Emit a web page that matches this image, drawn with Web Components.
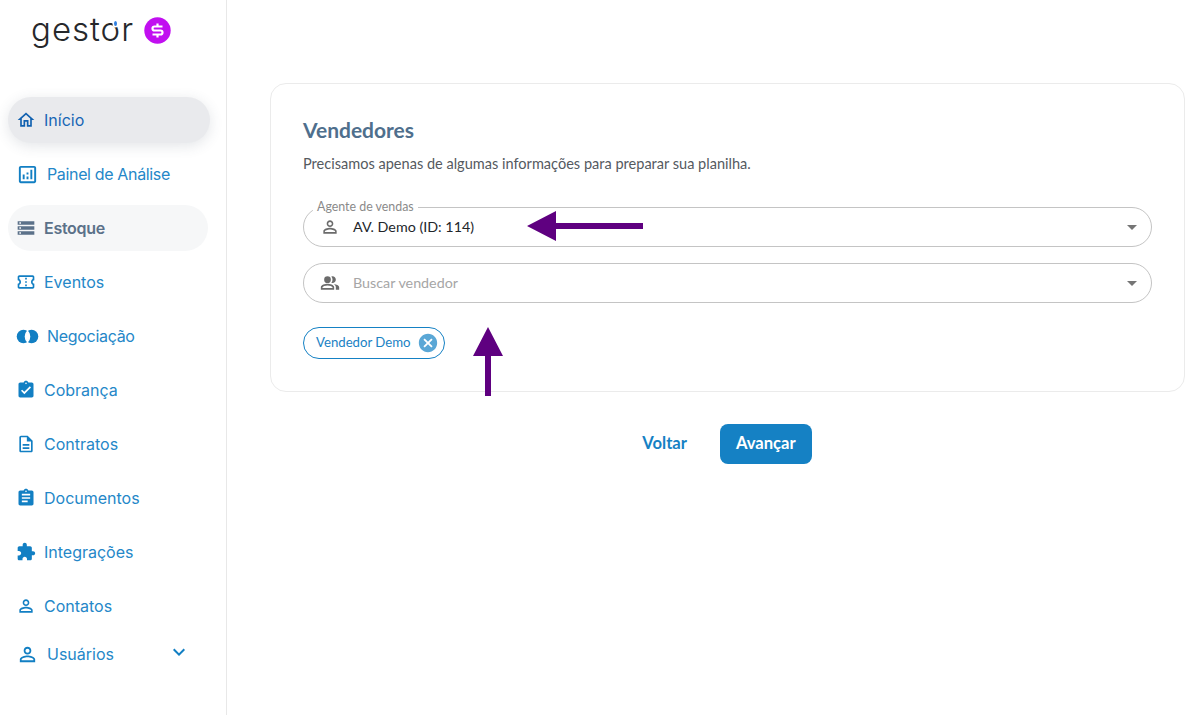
<!DOCTYPE html>
<html lang="pt-BR">
<head>
<meta charset="utf-8">
<title>Vendedores</title>
<style>
html, body { margin: 0; height: 100%; background: #fff; }
body { font-family: "Inter", sans-serif; overflow: hidden; }
gestor-app { height: 715px; }
</style>
</head>
<body>
<gestor-app>
  <gestor-sidebar slot="sidebar">
    <nav-item icon="home" state="active" style="--tone:#1766b5;--icon-tone:#1161b0">Início</nav-item>
    <nav-item icon="analytics" wide style="letter-spacing:-.35px">Painel de Análise</nav-item>
    <nav-item icon="storage" state="muted">Estoque</nav-item>
    <nav-item icon="ticket">Eventos</nav-item>
    <nav-item icon="join" wide style="letter-spacing:-.3px">Negociação</nav-item>
    <nav-item icon="billing">Cobrança</nav-item>
    <nav-item icon="file">Contratos</nav-item>
    <nav-item icon="clipboard">Documentos</nav-item>
    <nav-item icon="puzzle">Integrações</nav-item>
    <nav-item icon="person">Contatos</nav-item>
    <nav-item icon="person" wide expandable class="last">Usuários</nav-item>
  </gestor-sidebar>

  <form-card>
    <span slot="title">Vendedores</span>
    <span slot="subtitle">Precisamos apenas de algumas informações para preparar sua planilha.</span>
    <select-field label="Agente de vendas" value="AV. Demo (ID: 114)" icon="person"></select-field>
    <select-field placeholder="Buscar vendedor" icon="people"></select-field>
    <seller-chip>Vendedor Demo</seller-chip>
  </form-card>

  <form-actions></form-actions>

  <pointer-arrow dir="left"></pointer-arrow>
  <pointer-arrow dir="up"></pointer-arrow>
</gestor-app>

<script>
const ICONS = {
  home: '<path d="M12 5.69l5 4.5V18h-2v-6H9v6H7v-7.81l5-4.5M12 3L2 12h3v8h6v-6h2v6h6v-8h3L12 3z"/>',
  analytics: '<path d="M19 3H5c-1.1 0-2 .9-2 2v14c0 1.1.9 2 2 2h14c1.1 0 2-.9 2-2V5c0-1.1-.9-2-2-2zm0 16H5V5h14v14z"/><path d="M7 12h2v5H7zm8-5h2v10h-2zm-4 7h2v3h-2zm0-4h2v2h-2z"/>',
  storage: '<path d="M2 20h20v-4H2v4zm2-3h2v2H4v-2zM2 4v4h20V4H2zm4 3H4V5h2v2zm-4 7h20v-4H2v4zm2-3h2v2H4v-2z"/>',
  ticket: '<path d="M22 10V6c0-1.1-.9-2-2-2H4c-1.1 0-1.99.9-1.99 2v4c1.1 0 1.99.9 1.99 2s-.89 2-2 2v4c0 1.1.9 2 2 2h16c1.1 0 2-.9 2-2v-4c-1.1 0-2-.9-2-2s.9-2 2-2zm-2-1.46c-1.19.69-2 1.99-2 3.46s.81 2.77 2 3.46V18H4v-2.54c1.19-.69 2-1.99 2-3.46 0-1.48-.8-2.77-1.99-3.46L4 6h16v2.54z"/><path d="M11 15h2v2h-2zm0-4h2v2h-2zm0-4h2v2h-2z"/>',
  join: '<circle cx="7.75" cy="12" r="7"/><circle cx="16.25" cy="12" r="7"/><path d="M12 6.6A7.6 7.6 0 0 1 12 17.4A7.6 7.6 0 0 1 12 6.6z" fill="#fff" stroke="#fff" stroke-width="1.4"/>',
  billing: '<path d="M19 3h-4.18C14.4 1.84 13.3 1 12 1c-1.3 0-2.4.84-2.82 2H5c-1.1 0-2 .9-2 2v14c0 1.1.9 2 2 2h14c1.1 0 2-.9 2-2V5c0-1.1-.9-2-2-2zm-7 0c.55 0 1 .45 1 1s-.45 1-1 1-1-.45-1-1 .45-1 1-1zm-2 14l-4-4 1.41-1.41L10 14.17l6.59-6.59L18 9l-8 8z"/>',
  file: '<path d="M8 16h8v2H8zm0-4h8v2H8zm6-10H6c-1.1 0-2 .9-2 2v16c0 1.1.89 2 1.99 2H18c1.1 0 2-.9 2-2V8l-6-6zm4 18H6V4h7v5h5v11z"/>',
  clipboard: '<path d="M19 3h-4.18C14.4 1.84 13.3 1 12 1c-1.3 0-2.4.84-2.82 2H5c-1.1 0-2 .9-2 2v14c0 1.1.9 2 2 2h14c1.1 0 2-.9 2-2V5c0-1.1-.9-2-2-2zm-7 0c.55 0 1 .45 1 1s-.45 1-1 1-1-.45-1-1 .45-1 1-1zm2 14H7v-2h7v2zm3-4H7v-2h10v2zm0-4H7V7h10v2z"/>',
  puzzle: '<path d="M20.5 11H19V7c0-1.1-.9-2-2-2h-4V3.5C13 2.12 11.88 1 10.5 1S8 2.12 8 3.5V5H4c-1.1 0-1.99.9-1.99 2v3.8H3.5c1.49 0 2.7 1.21 2.7 2.7s-1.21 2.7-2.7 2.7H2V20c0 1.1.9 2 2 2h3.8v-1.5c0-1.49 1.21-2.7 2.7-2.7 1.49 0 2.7 1.21 2.7 2.7V22H17c1.1 0 2-.9 2-2v-4h1.5c1.38 0 2.5-1.12 2.5-2.5S21.88 11 20.5 11z"/>',
  person: '<path d="M12 5.9c1.16 0 2.1.94 2.1 2.1s-.94 2.1-2.1 2.1S9.9 9.16 9.9 8s.94-2.1 2.1-2.1m0 9c2.97 0 6.1 1.46 6.1 2.1v1.1H5.9V17c0-.64 3.13-2.1 6.1-2.1M12 4C9.79 4 8 5.79 8 8s1.79 4 4 4 4-1.79 4-4-1.79-4-4-4zm0 9c-2.67 0-8 1.34-8 4v3h16v-3c0-2.66-5.33-4-8-4z"/>',
  people: '<path d="M16.67 13.13C18.04 14.06 19 15.32 19 17v3h4v-3c0-2.18-3.57-3.47-6.33-3.87z"/><path d="M15 12c2.21 0 4-1.79 4-4s-1.79-4-4-4c-.47 0-.91.1-1.33.24C14.5 5.27 15 6.58 15 8s-.5 2.73-1.33 3.76c.42.14.86.24 1.33.24z"/><circle cx="9" cy="8" r="4"/><path d="M9 13c-2.67 0-8 1.34-8 4v3h16v-3c0-2.66-5.33-4-8-4zm6 5H3v-.99C3.2 16.29 6.3 15 9 15s5.8 1.29 6 2v1z"/>',
  cancel: '<path d="M12 2C6.47 2 2 6.47 2 12s4.47 10 10 10 10-4.47 10-10S17.53 2 12 2zm5 13.59L15.59 17 12 13.41 8.41 17 7 15.59 10.59 12 7 8.41 8.41 7 12 10.59 15.59 7 17 8.41 13.41 12 17 15.59z"/>',
  expand: '<path d="M16.59 8.59L12 13.17 7.41 8.59 6 10l6 6 6-6z"/>',
};

const svgIcon = (name, size) =>
  `<svg width="${size}" height="${size}" viewBox="0 0 24 24" fill="currentColor" aria-hidden="true">${ICONS[name]}</svg>`;

const FORM_FONT = '"Lato", "Noto Sans", sans-serif';

class GestorApp extends HTMLElement {
  constructor() {
    super();
    this.attachShadow({ mode: 'open' });
    this.shadowRoot.innerHTML = `
<style>
:host { display: flex; width: 1203px; position: relative; }
main { flex: 1; display: flex; flex-direction: column; padding: 83px 18px 0 43px; min-width: 0; }
</style>
<slot name="sidebar"></slot>
<main><slot></slot></main>`;
  }
}

class GestorSidebar extends HTMLElement {
  constructor() {
    super();
    this.attachShadow({ mode: 'open' });
    this.shadowRoot.innerHTML = `
<style>
:host { display: block; flex: none; width: 227px; box-sizing: border-box; border-right: 1px solid #e8e8e8; }
.logo { display: flex; align-items: center; gap: 10px; height: 97px; padding: 0 0 37px 31px; box-sizing: border-box; }
.word { position: relative; font: 350 33px/36px "Inter", sans-serif; color: #26282b; letter-spacing: 1px; margin-top: -3px; }
.word i { position: absolute; left: 83px; top: 10px; width: 3px; height: 5px; border-radius: 50%; background: #2f7fe0; box-shadow: 0 0 0 1.5px #fff; }
nav { display: flex; flex-direction: column; gap: 8px; padding-left: 8px; }
</style>
<div class="logo">
  <span class="word">gestor<i></i></span>
  <svg width="27" height="27" viewBox="0 0 27 27" aria-hidden="true">
    <circle cx="13.5" cy="13.5" r="13.2" fill="#c10ff0"/>
    <path d="M18.5 9.5H10.5a1.8 1.8 0 0 0 0 4h6a1.8 1.8 0 0 1 0 4H8.5M13.5 6.4v2.4M13.5 18v2.4" fill="none" stroke="#fff" stroke-width="2.2"/>
  </svg>
</div>
<nav><slot></slot></nav>`;
  }
}

class NavItem extends HTMLElement {
  constructor() {
    super();
    this.attachShadow({ mode: 'open' });
  }

  connectedCallback() {
    const extra = this.hasAttribute('expandable')
      ? `<span class="more">${svgIcon('expand', 24)}</span>`
      : '';
    const size = this.hasAttribute('wide') ? 23 : 20;
    this.shadowRoot.innerHTML = `
<style>
:host { display: flex; align-items: center; height: 46px; width: 200px; border-radius: 23px; box-sizing: border-box; padding-left: 8px; font: 400 16px/24px "Inter", sans-serif; color: var(--tone, #2487c8); }
:host([state="active"]) { width: 202px; background: #e9eaed; box-shadow: 0 3px 14px rgba(60,70,90,.14); }
:host([state="muted"]) { background: #f6f7f8; color: #5b7189; font-weight: 600; --icon-tone: #5b7189; letter-spacing: -.3px; }
:host(.last) { margin-top: -6px; }
.icon { display: flex; flex: none; margin-right: 8px; color: var(--icon-tone, #127fc3); }
.more { display: flex; margin-left: auto; margin-right: 17px; margin-top: -4px; color: #127fc3; }
</style>
<span class="icon">${svgIcon(this.getAttribute('icon'), size)}</span>
<slot></slot>${extra}`;
  }
}

class FormCard extends HTMLElement {
  constructor() {
    super();
    this.attachShadow({ mode: 'open' });
    this.shadowRoot.innerHTML = `
<style>
:host { display: flex; flex-direction: column; height: 309px; box-sizing: border-box; padding: 33px 32px 0; border: 1px solid #ebebeb; border-radius: 16px; background: #fff; font-family: ${FORM_FONT}; }
h2 { margin: 0; font-size: 21px; line-height: 26px; font-weight: 700; color: #4f6f8d; }
p { margin: 11px 0 0; font-size: 14.55px; line-height: 20px; color: #555a5f; }
.fields { display: flex; flex-direction: column; gap: 16px; margin-top: 33px; }
</style>
<h2><slot name="title"></slot></h2>
<p><slot name="subtitle"></slot></p>
<div class="fields"><slot></slot></div>`;
  }
}

class SelectField extends HTMLElement {
  constructor() {
    super();
    this.attachShadow({ mode: 'open' });
  }

  connectedCallback() {
    const label = this.getAttribute('label');
    const value = this.getAttribute('value');
    const placeholder = this.getAttribute('placeholder');
    this.shadowRoot.innerHTML = `
<style>
:host { display: flex; align-items: center; position: relative; height: 40px; box-sizing: border-box; border: 1px solid #c4c4c4; border-radius: 20px; padding: 0 14px 0 16px; font: 14.3px/20px ${FORM_FONT}; }
.icon { display: flex; color: #6b6b6b; margin-right: 13px; }
.value { color: #22262a; flex: 1; }
.value.empty { color: #a6a6a6; }
.legend { position: absolute; left: 9px; top: -8px; padding: 0 4px; background: #fff; font-size: 12.4px; line-height: 14px; color: #8a8a8a; }
.caret { width: 0; height: 0; border-left: 5px solid transparent; border-right: 5px solid transparent; border-top: 5px solid #757575; }
</style>
${label ? `<span class="legend">${label}</span>` : ''}
<span class="icon">${svgIcon(this.getAttribute('icon'), 20)}</span>
<span class="value ${value ? '' : 'empty'}">${value || placeholder}</span>
<span class="caret"></span>`;
  }
}

class SellerChip extends HTMLElement {
  constructor() {
    super();
    this.attachShadow({ mode: 'open' });
    this.shadowRoot.innerHTML = `
<style>
:host { display: inline-flex; align-self: flex-start; align-items: center; height: 32px; margin-top: 8px; box-sizing: border-box; border: 1px solid #1581c4; border-radius: 16px; padding: 0 5px 0 12px; font: 13.2px/18px ${FORM_FONT}; color: #1a82c4; background: #fff; }
.label { padding-bottom: 3px; }
.x { display: flex; margin-left: 6px; color: #5aa7d6; }
</style>
<span class="label"><slot></slot></span>
<span class="x">${svgIcon('cancel', 22)}</span>`;
  }
}

class FormActions extends HTMLElement {
  constructor() {
    super();
    this.attachShadow({ mode: 'open' });
    this.shadowRoot.innerHTML = `
<style>
:host { display: flex; justify-content: center; gap: 17px; margin-top: 32px; padding-right: 17px; font-family: ${FORM_FONT}; }
button { height: 40px; border: 0; border-radius: 8px; padding: 0 16px 2px; font: 700 16.6px/20px ${FORM_FONT}; background: transparent; color: #1581c4; }
.primary { background: #1581c4; color: #fff; }
</style>
<button type="button">Voltar</button>
<button type="button" class="primary">Avançar</button>`;
  }
}

// annotation arrows drawn over the screenshot
class PointerArrow extends HTMLElement {
  constructor() {
    super();
    this.attachShadow({ mode: 'open' });
  }

  connectedCallback() {
    const up = this.getAttribute('dir') === 'up';
    const box = up
      ? 'left:473px;top:327px;width:30px;height:69px'
      : 'left:527px;top:211px;width:116px;height:30px';
    const shape = up
      ? '<path d="M15 0L30 29H18V69H12V29H0z"/>'
      : '<path d="M0 15L29 0V12H116V18H29V30z"/>';
    const [w, h] = up ? [30, 69] : [116, 30];
    this.shadowRoot.innerHTML = `
<style>:host { position: absolute; display: block; ${box}; } svg { display: block; }</style>
<svg width="${w}" height="${h}" viewBox="0 0 ${w} ${h}" fill="#5f0080" aria-hidden="true">${shape}</svg>`;
  }
}

customElements.define('gestor-app', GestorApp);
customElements.define('gestor-sidebar', GestorSidebar);
customElements.define('nav-item', NavItem);
customElements.define('form-card', FormCard);
customElements.define('select-field', SelectField);
customElements.define('seller-chip', SellerChip);
customElements.define('form-actions', FormActions);
customElements.define('pointer-arrow', PointerArrow);
</script>
</body>
</html>
